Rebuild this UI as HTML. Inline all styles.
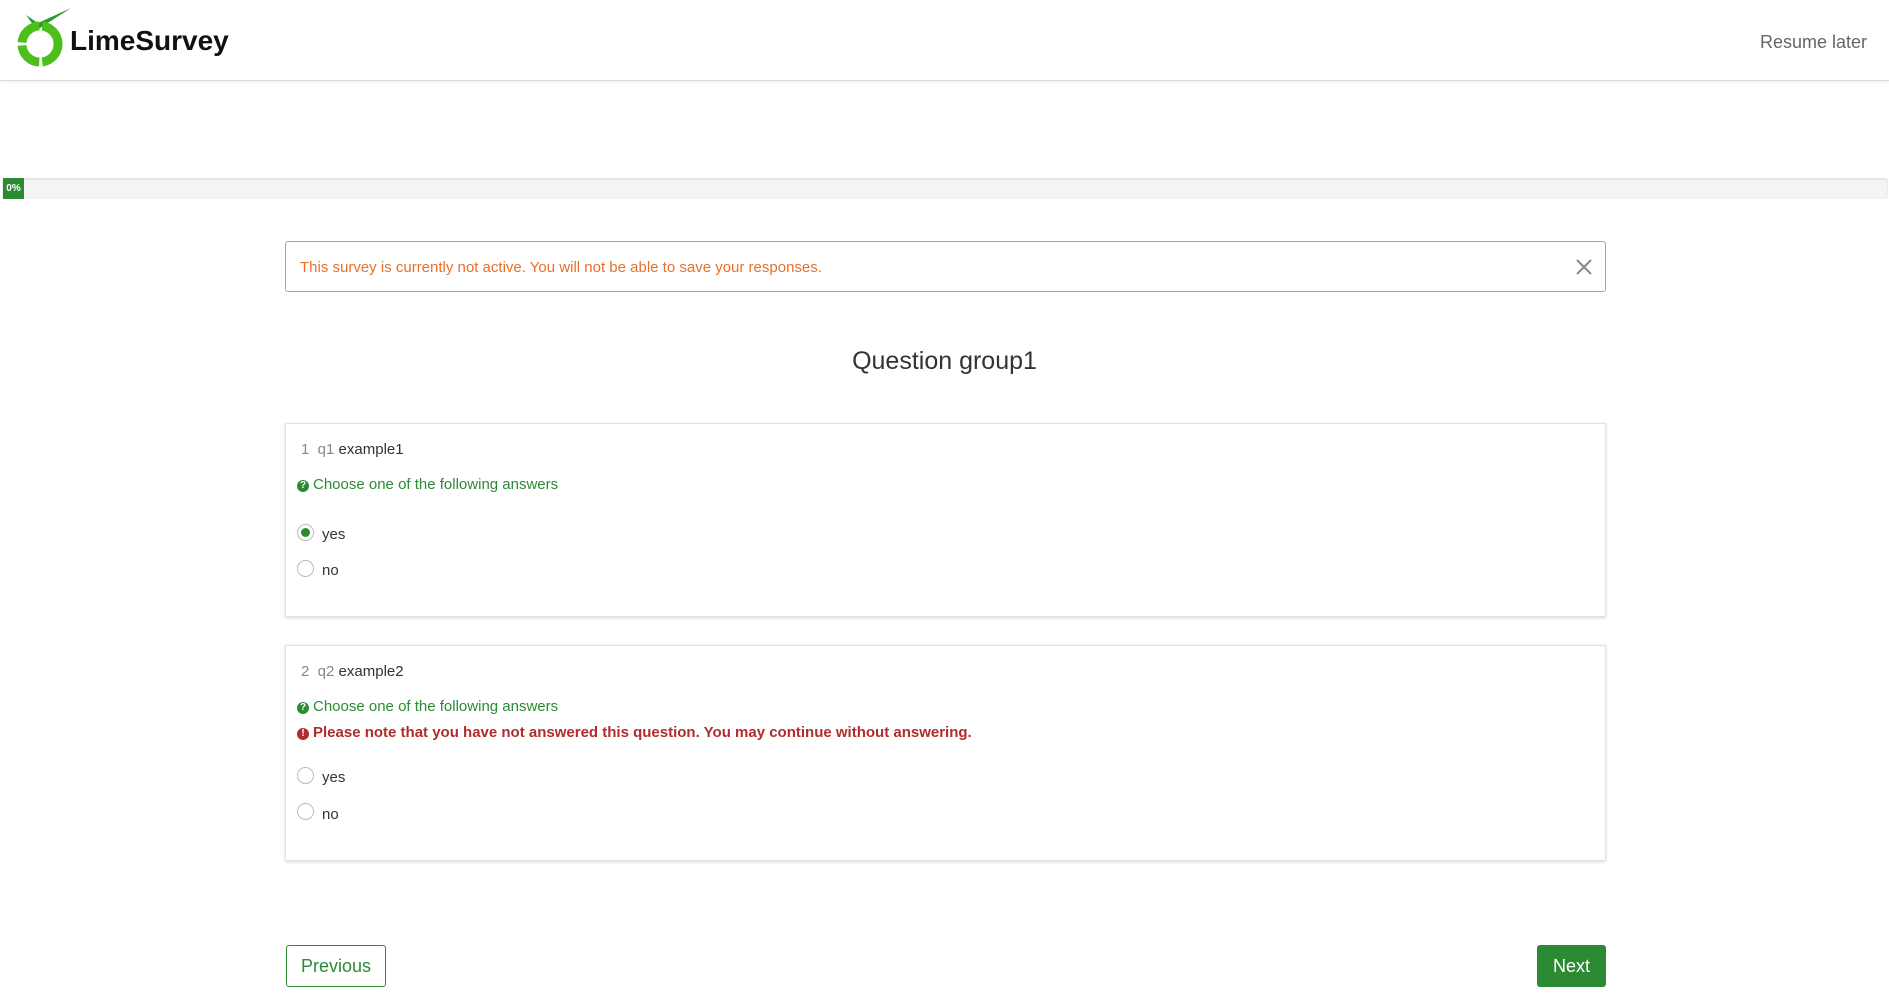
<!DOCTYPE html>
<html><head><meta charset="utf-8"><style>
*{box-sizing:border-box;margin:0;padding:0}
body{width:1889px;height:1000px;overflow:hidden;background:#fff;font-family:"Liberation Sans",sans-serif;color:#333;position:relative}
.abs{position:absolute;white-space:nowrap}
.hdr{position:absolute;left:0;top:0;width:1889px;height:81px;border-bottom:1px solid #ddd;box-shadow:0 1px 3px rgba(0,0,0,.08)}
.box{position:absolute;left:285px;width:1321px;border:1px solid #e2e2e2;box-shadow:0 1px 3px rgba(0,0,0,.15)}
.radio{position:absolute;width:17px;height:17px;border:1px solid #bbb;border-radius:50%;background:#fff}
.radio.on::after{content:"";position:absolute;left:3px;top:3px;width:9px;height:9px;border-radius:50%;background:#2d8a34}
.t15{font-size:15px}
.g{color:#2d8a34}
.ic{display:inline-block;width:12px;height:12px;border-radius:50%;color:#fff;font-size:10px;line-height:12px;text-align:center;font-weight:bold;vertical-align:1px;margin-right:4px}
</style></head><body>
<div class="hdr"></div>
<svg class="abs" style="left:16px;top:6px" width="58" height="62" viewBox="0 0 58 62">
<path d="M10 9 L21 24 L55 2 L22 17 Z" fill="#2b9a2f"/>
<circle cx="24" cy="38" r="18" fill="none" stroke="#4cbf1a" stroke-width="9" stroke-dasharray="26 3"/>
<circle cx="24" cy="38" r="13.5" fill="#fff"/>
</svg>
<div class="abs" style="left:70px;top:25px;font-size:28px;font-weight:bold;color:#111">LimeSurvey</div>
<div class="abs" style="right:22px;top:32px;font-size:18px;color:#666">Resume later</div>

<div class="abs" style="left:2px;top:178px;width:1886px;height:21px;background:#f4f4f4;box-shadow:inset 0 1px 2px rgba(0,0,0,.1);border-radius:3px"></div>
<div class="abs" style="left:3px;top:178px;width:21px;height:21px;background:#2d8a34;color:#fff;font-size:10px;font-weight:bold;line-height:21px;text-align:center">0%</div>

<div class="abs" style="left:285px;top:241px;width:1321px;height:51px;border:1px solid #f0914a;border-radius:3px"></div>
<div class="abs" style="left:300px;top:259px;font-size:15px;color:#e8702a">This survey is currently not active. You will not be able to save your responses.</div>
<svg class="abs" style="left:1576px;top:259px" width="16" height="16" viewBox="0 0 16 16"><path d="M1 1L15 15M15 1L1 15" stroke="#888" stroke-width="2"/></svg>

<div class="abs" style="left:0;width:1889px;text-align:center;top:347px;font-size:25px;color:#333">Question group1</div>

<div class="box" style="top:423px;height:194px"></div>
<div class="abs t15" style="left:301px;top:441px"><span style="color:#888">1&nbsp;&nbsp;q1</span> example1</div>
<div class="abs t15 g" style="left:297px;top:476px"><span class="ic" style="background:#2d8a34">?</span>Choose one of the following answers</div>
<div class="radio on" style="left:297px;top:524px"></div><div class="abs t15" style="left:322px;top:526px">yes</div>
<div class="radio" style="left:297px;top:560px"></div><div class="abs t15" style="left:322px;top:562px">no</div>

<div class="box" style="top:645px;height:216px"></div>
<div class="abs t15" style="left:301px;top:663px"><span style="color:#888">2&nbsp;&nbsp;q2</span> example2</div>
<div class="abs t15 g" style="left:297px;top:698px"><span class="ic" style="background:#2d8a34">?</span>Choose one of the following answers</div>
<div class="abs t15" style="left:297px;top:724px;color:#b12c2c;font-weight:bold"><span class="ic" style="background:#b12c2c">!</span>Please note that you have not answered this question. You may continue without answering.</div>
<div class="radio" style="left:297px;top:767px"></div><div class="abs t15" style="left:322px;top:769px">yes</div>
<div class="radio" style="left:297px;top:803px"></div><div class="abs t15" style="left:322px;top:806px">no</div>

<div class="abs" style="left:286px;top:945px;width:100px;height:42px;border:1px solid #2d8a34;border-radius:3px;color:#2d8a34;font-size:18px;line-height:40px;text-align:center">Previous</div>
<div class="abs" style="left:1537px;top:945px;width:69px;height:42px;background:#2d8a34;border-radius:3px;color:#fff;font-size:18px;line-height:42px;text-align:center">Next</div>
</body></html>
